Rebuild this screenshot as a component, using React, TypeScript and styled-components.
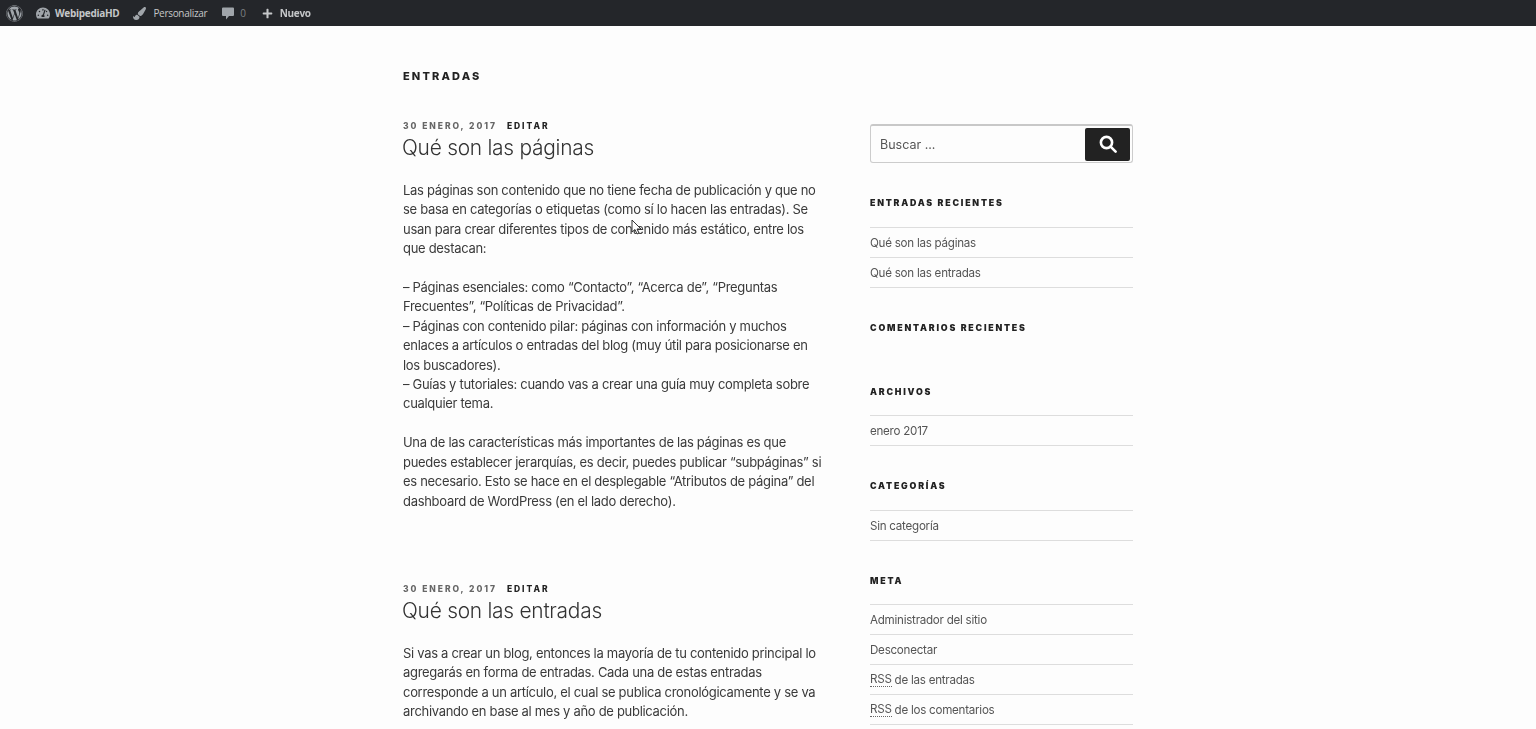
import styled, { createGlobalStyle } from "styled-components";
import { FaPlus, FaPaintBrush, FaTachometerAlt, FaWordpress } from "react-icons/fa";

const Global = createGlobalStyle`
  html, body {
    margin: 0;
    padding: 0;
    background: #fdfdfd;
    overflow: hidden;
  }
  body {
    font-family: "Inter", "Liberation Sans", sans-serif;
    color: #333;
  }
`;

const Page = styled.div`
  position: relative;
  width: 1536px;
  height: 729px;
  overflow: hidden;
  filter: blur(0.45px);
`;

const AdminBar = styled.div`
  height: 26px;
  background: #24262a;
  display: flex;
  align-items: center;
  padding-left: 6px;
  color: #c5c7c9;
  font-family: "Open Sans", "Liberation Sans", sans-serif;
  font-size: 10px;
`;

const BarItem = styled.div<{ $gap: number; $left: number }>`
  display: flex;
  align-items: center;
  gap: ${(p) => p.$gap}px;
  margin-left: ${(p) => p.$left}px;
  color: #c4c6c8;
  letter-spacing: -0.3px;
`;

const Count = styled.span`
  color: #7d8084;
`;

const Wrap = styled.div`
  display: grid;
  grid-template-columns: 423px 263px;
  column-gap: 44px;
  padding: 44px 0 0 403px;
`;

const PageTitle = styled.h1`
  grid-column: 1 / 3;
  margin: 0 0 38px;
  font-size: 11px;
  line-height: 12px;
  font-weight: 800;
  letter-spacing: 2.15px;
  color: #222;
`;

const Main = styled.main`
  display: flex;
  flex-direction: column;
  gap: 72px;
`;

const Meta = styled.div`
  font-size: 8.5px;
  line-height: 12px;
  font-weight: 800;
  letter-spacing: 1.95px;
  color: #666;
`;

const Edit = styled.span`
  color: #222;
  margin-left: 10px;
`;

const PostTitle = styled.h2`
  margin: 2px 0 19px -1px;
  font-size: 20.9px;
  line-height: 28px;
  font-weight: 300;
  letter-spacing: -0.25px;
  color: #333;
`;

const Body = styled.p`
  margin: 0;
  font-size: 13px;
  line-height: 19.4px;
  letter-spacing: -0.3px;
  color: #3a3a3a;
  white-space: nowrap;
`;

const Sidebar = styled.aside`
  display: flex;
  flex-direction: column;
  padding-top: 4px;
`;

const SearchBox = styled.div`
  box-sizing: border-box;
  height: 39px;
  border: 1px solid #ccc;
  border-top: 2px solid #c8c8c8;
  border-radius: 3px;
  display: flex;
  align-items: center;
  justify-content: space-between;
  padding-left: 9px;
  padding-right: 2px;
  font-size: 12.5px;
  color: #555;
  margin-bottom: 34px;
`;

const SearchButton = styled.div`
  width: 45px;
  height: 33px;
  background: #222;
  border-radius: 2px;
  display: flex;
  align-items: center;
  justify-content: center;
`;

const WidgetTitle = styled.h3<{ $after: number }>`
  margin: 0 0 ${(p) => p.$after}px;
  font-size: 8.8px;
  line-height: 12px;
  font-weight: 900;
  letter-spacing: 1.8px;
  color: #222;
`;

const WidgetList = styled.ul`
  list-style: none;
  margin: 0 0 34px;
  padding: 0;
  border-top: 1px solid #ddd;
`;

const WidgetItem = styled.li`
  height: 29px;
  border-bottom: 1px solid #ddd;
  display: flex;
  align-items: center;
  gap: 3px;
  font-size: 11.6px;
  letter-spacing: -0.25px;
  color: #555;
`;

const Abbr = styled.span`
  border-bottom: 1px dotted #666;
  line-height: 13px;
`;

const Cursor = styled.svg`
  position: absolute;
  left: 631px;
  top: 219px;
`;

function Post({ title, text }: { title: string; text: string[] }) {
  return (
    <article>
      <Meta>
        30 ENERO, 2017<Edit>EDITAR</Edit>
      </Meta>
      <PostTitle>{title}</PostTitle>
      <Body>
        {text.map((line, i) => (
          <span key={i}>
            {line}
            <br />
          </span>
        ))}
      </Body>
    </article>
  );
}

const first = [
  "Las páginas son contenido que no tiene fecha de publicación y que no",
  "se basa en categorías o etiquetas (como sí lo hacen las entradas). Se",
  "usan para crear diferentes tipos de contenido más estático, entre los",
  "que destacan:",
  "\u00a0",
  "– Páginas esenciales: como “Contacto”, “Acerca de”, “Preguntas",
  "Frecuentes”, “Políticas de Privacidad”.",
  "– Páginas con contenido pilar: páginas con información y muchos",
  "enlaces a artículos o entradas del blog (muy útil para posicionarse en",
  "los buscadores).",
  "– Guías y tutoriales: cuando vas a crear una guía muy completa sobre",
  "cualquier tema.",
  "\u00a0",
  "Una de las características más importantes de las páginas es que",
  "puedes establecer jerarquías, es decir, puedes publicar “subpáginas” si",
  "es necesario. Esto se hace en el desplegable “Atributos de página” del",
  "dashboard de WordPress (en el lado derecho).",
];

const second = [
  "Si vas a crear un blog, entonces la mayoría de tu contenido principal lo",
  "agregarás en forma de entradas. Cada una de estas entradas",
  "corresponde a un artículo, el cual se publica cronológicamente y se va",
  "archivando en base al mes y año de publicación.",
];

export default function App() {
  return (
    <Page>
      <Global />
      <AdminBar>
        <FaWordpress size={17} color="#a0a5aa" />
        <BarItem $gap={5} $left={13}>
          <FaTachometerAlt size={14} color="#a0a5aa" />
          <strong>WebipediaHD</strong>
        </BarItem>
        <BarItem $gap={7} $left={14}>
          <FaPaintBrush size={13} color="#a0a5aa" />
          Personalizar
        </BarItem>
        <BarItem $gap={6} $left={15}>
          <svg width="12" height="13" viewBox="0 0 12 13" fill="#a0a5aa">
            <path d="M1 0.5 H11 Q12 0.5 12 1.5 V8 Q12 9 11 9 H7 L4 12.5 V9 H1 Q0 9 0 8 V1.5 Q0 0.5 1 0.5 Z" />
          </svg>
          <Count>0</Count>
        </BarItem>
        <BarItem $gap={7} $left={16}>
          <FaPlus size={11} color="#c5c7c9" />
          <strong>Nuevo</strong>
        </BarItem>
      </AdminBar>
      <Wrap>
        <PageTitle>ENTRADAS</PageTitle>
        <Main>
          <Post title="Qué son las páginas" text={first} />
          <Post title="Qué son las entradas" text={second} />
        </Main>
        <Sidebar>
          <SearchBox>
            Buscar ...
            <SearchButton>
              <svg width="18" height="18" viewBox="0 0 18 18" fill="none" stroke="#fff" strokeWidth="2.6">
                <circle cx="7.5" cy="7.5" r="5.6" />
                <path d="M11.6 11.6 L16.6 16.6" strokeLinecap="round" />
              </svg>
            </SearchButton>
          </SearchBox>
          <WidgetTitle $after={18}>ENTRADAS RECIENTES</WidgetTitle>
          <WidgetList>
            <WidgetItem>Qué son las páginas</WidgetItem>
            <WidgetItem>Qué son las entradas</WidgetItem>
          </WidgetList>
          <WidgetTitle $after={52}>COMENTARIOS RECIENTES</WidgetTitle>
          <WidgetTitle $after={17}>ARCHIVOS</WidgetTitle>
          <WidgetList>
            <WidgetItem>enero 2017</WidgetItem>
          </WidgetList>
          <WidgetTitle $after={18}>CATEGORÍAS</WidgetTitle>
          <WidgetList>
            <WidgetItem>Sin categoría</WidgetItem>
          </WidgetList>
          <WidgetTitle $after={17}>META</WidgetTitle>
          <WidgetList>
            <WidgetItem>Administrador del sitio</WidgetItem>
            <WidgetItem>Desconectar</WidgetItem>
            <WidgetItem>
              <Abbr>RSS</Abbr> de las entradas
            </WidgetItem>
            <WidgetItem>
              <Abbr>RSS</Abbr> de los comentarios
            </WidgetItem>
          </WidgetList>
        </Sidebar>
      </Wrap>
      <Cursor width="11" height="16" viewBox="0 0 11 16">
        <path d="M1 1 L1 13 L4 10.5 L6 15 L8 14 L6 10 L10 10 Z" fill="#fff" stroke="#333" strokeWidth="1" />
      </Cursor>
    </Page>
  );
}
